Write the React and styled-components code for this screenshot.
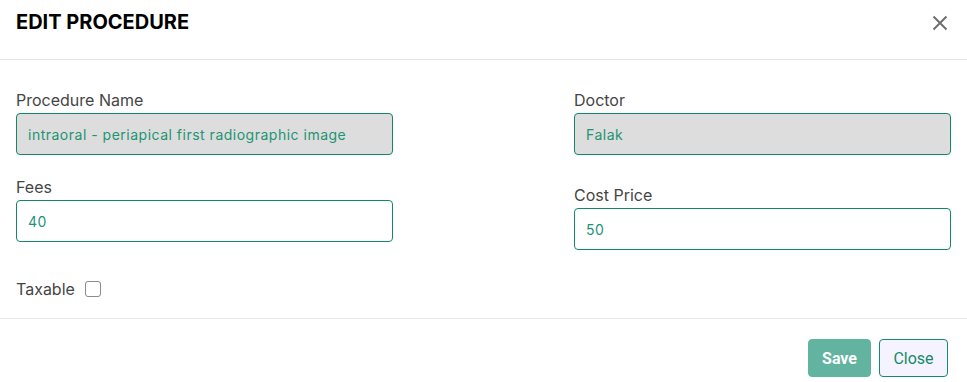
import React from "react";
import styled, { createGlobalStyle } from "styled-components";

const Global = createGlobalStyle`
  html, body { margin: 0; padding: 0; background: #fff; }
  body { font-family: Inter, "Liberation Sans", sans-serif; }
  * { box-sizing: border-box; }
`;

const Modal = styled.div`
  width: 967px;
  height: 382px;
  background: #fff;
  overflow: hidden;
`;

const Header = styled.div`
  height: 60px;
  padding: 10px 19px 0 16px;
  display: flex;
  align-items: flex-start;
  justify-content: space-between;
  border-bottom: 1px solid #e6e6e6;
`;

const Title = styled.h5`
  margin: 0;
  font-family: Inter, "Liberation Sans", sans-serif;
  font-weight: 700;
  font-size: 20px;
  color: #000;
  line-height: 24px;
`;

const CloseIcon = styled.button`
  border: 0;
  background: none;
  padding: 0;
  width: 16px;
  height: 16px;
  display: flex;
  margin-top: 5px;
  cursor: pointer;
`;

const Body = styled.div`
  padding: 30px 16px 0 16px;
  display: grid;
  grid-template-columns: 377px 377px;
  justify-content: space-between;
`;

const Column = styled.div`
  display: flex;
  flex-direction: column;
`;

const Field = styled.div`
  display: flex;
  flex-direction: column;
  margin-top: ${(p) => p.$gap || 0}px;
`;

const Label = styled.label`
  font-size: 16px;
  line-height: 20px;
  color: #454545;
  margin-bottom: 3px;
`;

const Input = styled.input`
  height: 42px;
  width: 100%;
  border: 1px solid #12876a;
  border-radius: 4px;
  padding: 0 11px;
  font-family: Inter, "Liberation Sans", sans-serif;
  font-size: 14px;
  letter-spacing: 0.5px;
  color: #1d9474;
  background: ${(p) => (p.readOnly ? "#dddddd" : "#ffffff")};
  outline: none;
`;

const CheckRow = styled.div`
  display: flex;
  align-items: center;
  gap: 10px;
  margin-top: 37px;
  height: 20px;
`;

const CheckLabel = styled.span`
  font-size: 16px;
  line-height: 20px;
  color: #454545;
`;

const Box = styled.span`
  width: 16px;
  height: 16px;
  border: 1px solid #8a8a8a;
  border-radius: 3px;
  background: #fff;
  display: inline-block;
`;

const Footer = styled.div`
  margin-top: 19px;
  border-top: 1px solid #e6e6e6;
  padding: 20px 19px 0 16px;
  display: flex;
  justify-content: flex-end;
  gap: 8px;
`;

const Button = styled.button`
  height: 38px;
  padding: 0 12px;
  border-radius: 4px;
  font-family: Roboto, "Liberation Sans", sans-serif;
  font-size: 16px;
  font-weight: ${(p) => (p.$primary ? 700 : 400)};
  color: ${(p) => (p.$primary ? "#ffffff" : "#168a6c")};
  background: ${(p) => (p.$primary ? "#62b3a0" : "#f5f3ff")};
  border: 1px solid ${(p) => (p.$primary ? "#62b3a0" : "#168a6c")};
  min-width: ${(p) => (p.$primary ? 63 : 69)}px;
`;

export default function App() {
  return (
    <Modal>
      <Global />
      <Header>
        <Title>EDIT PROCEDURE</Title>
        <CloseIcon aria-label="close">
          <svg width="16" height="16" viewBox="0 0 16 16">
            <path d="M1.5 1.5 L14.5 14.5 M14.5 1.5 L1.5 14.5" stroke="#6e6e6e" strokeWidth="2" fill="none" />
          </svg>
        </CloseIcon>
      </Header>
      <Body>
        <Column>
          <Field>
            <Label>Procedure Name</Label>
            <Input readOnly value="intraoral - periapical first radiographic image" />
          </Field>
          <Field $gap={22}>
            <Label>Fees</Label>
            <Input value="40" onChange={() => {}} />
          </Field>
          <CheckRow>
            <CheckLabel>Taxable</CheckLabel>
            <Box />
          </CheckRow>
        </Column>
        <Column>
          <Field>
            <Label>Doctor</Label>
            <Input readOnly value="Falak" />
          </Field>
          <Field $gap={30}>
            <Label>Cost Price</Label>
            <Input value="50" onChange={() => {}} />
          </Field>
        </Column>
      </Body>
      <Footer>
        <Button $primary>Save</Button>
        <Button>Close</Button>
      </Footer>
    </Modal>
  );
}
